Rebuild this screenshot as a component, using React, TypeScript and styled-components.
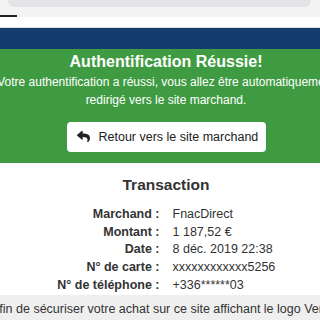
import React from 'react'
import styled, { createGlobalStyle } from 'styled-components'
import { FaReply } from 'react-icons/fa'

const GlobalStyle = createGlobalStyle`
  html, body {
    margin: 0;
    padding: 0;
    overflow: hidden;
    background: #ffffff;
    font-family: 'Liberation Sans', Arial, sans-serif;
  }
`

interface Row {
  label: string
  value: string
}

const rows: Row[] = [
  { label: 'Marchand', value: 'FnacDirect' },
  { label: 'Montant', value: '1 187,52 €' },
  { label: 'Date', value: '8 déc. 2019 22:38' },
  { label: 'N° de carte', value: 'xxxxxxxxxxxx5256' },
  { label: 'N° de téléphone', value: '+336******03' }
]

const App: React.FC = () => {
  return (
    <>
      <GlobalStyle />
      <Page>
        <BrowserBar>
          <AddressField />
          <Progress />
        </BrowserBar>
        <Header />
        <Success>
          <Title>Authentification Réussie!</Title>
          <Message>
            Votre authentification a réussi, vous allez être automatiquement
            <br />
            redirigé vers le site marchand.
          </Message>
          <BackButton>
            <FaReply size={13} />
            <span>Retour vers le site marchand</span>
          </BackButton>
        </Success>
        <Details>
          <Heading>Transaction</Heading>
          <Table>
            {rows.map((r) => (
              <React.Fragment key={r.label}>
                <Label>{r.label} :</Label>
                <Value>{r.value}</Value>
              </React.Fragment>
            ))}
          </Table>
        </Details>
        <Notice>
          <p>Afin de sécuriser votre achat sur ce site affichant le logo Verified by Visa</p>
        </Notice>
      </Page>
    </>
  )
}

export default App

const Page = styled.div`
  width: 332px;
  height: 320px;
  overflow: hidden;
  display: flex;
  flex-direction: column;
`

const BrowserBar = styled.div`
  height: 17px;
  background: #f4f4f5;
  display: flex;
  flex-direction: column;
  justify-content: space-between;
`

const AddressField = styled.div`
  height: 7px;
  margin: 0 21px 0 8px;
  background: #e4e4e6;
  border-radius: 0 0 6px 6px;
`

const Progress = styled.div`
  width: 17px;
  height: 2px;
  background: #222;
`

const Header = styled.div`
  height: 22px;
  margin-top: 10px;
  background: #143c6c;
  border-top: 1px solid #d8dde4;
`

const Success = styled.div`
  background: #3f9b42;
  color: #fff;
  height: 117px;
  display: flex;
  flex-direction: column;
  align-items: center;
  padding-top: 3px;
  box-sizing: border-box;
`

const Title = styled.h1`
  margin: 0;
  font-size: 16px;
  font-weight: bold;
  line-height: 20px;
`

const Message = styled.p`
  margin: 1px 0 0;
  font-size: 12px;
  line-height: 18px;
  text-align: center;
  white-space: nowrap;
`

const BackButton = styled.button`
  margin-top: 13px;
  width: 199px;
  height: 30px;
  background: #fff;
  border: none;
  border-radius: 4px;
  display: flex;
  align-items: center;
  gap: 9px;
  padding: 0 0 0 10px;
  color: #222;
  font-family: 'Liberation Sans', Arial, sans-serif;
  font-size: 12.5px;
  white-space: nowrap;
`

const Details = styled.div`
  flex: 1;
  display: flex;
  flex-direction: column;
  align-items: center;
  padding-top: 12px;
  color: #333;
`

const Heading = styled.h2`
  margin: 0;
  font-size: 15.5px;
  font-weight: bold;
  line-height: 20px;
`

const Table = styled.div`
  margin-top: 11px;
  display: grid;
  grid-template-columns: 1fr 1fr;
  column-gap: 13px;
  width: 332px;
  font-size: 12.5px;
  line-height: 17.8px;
`

const Label = styled.div`
  text-align: right;
  font-weight: bold;
`

const Value = styled.div`
  text-align: left;
`

const Notice = styled.div`
  height: 26px;
  background: #efefef;
  color: #333;
  overflow: hidden;
  & p {
    margin: 6px 0 0 -9px;
    font-size: 12.5px;
    line-height: 16px;
    white-space: nowrap;
  }
`
